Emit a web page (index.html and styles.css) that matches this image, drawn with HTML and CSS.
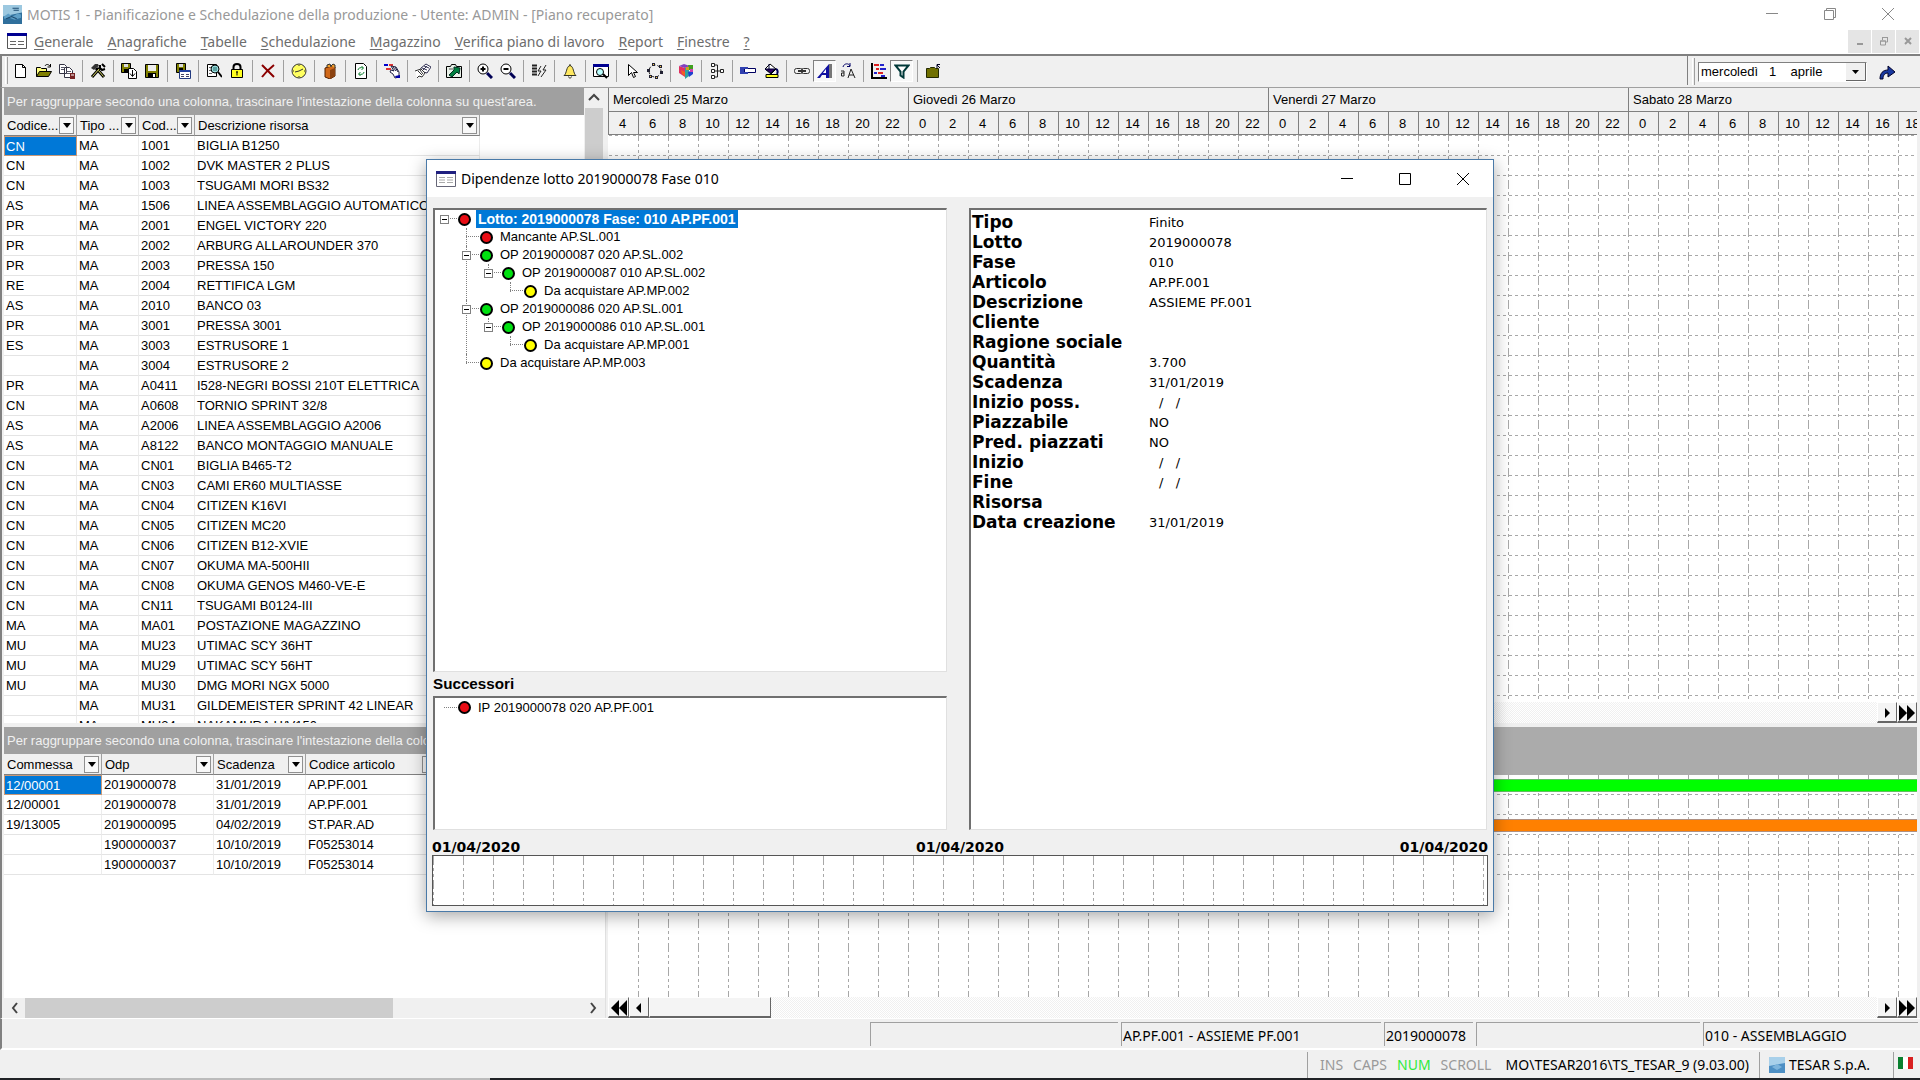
FILE: index.html
```html
<!DOCTYPE html>
<html lang="it">
<head>
  <meta charset="UTF-8">
  <meta name="viewport" content="width=device-width, initial-scale=1.0">
  <title>MOTIS 1 - Pianificazione e Schedulazione della produzione</title>
  <link rel="stylesheet" href="styles.css">
</head>
<body>
  <!-- barra del titolo -->
  <header class="titlebar">
    <svg class="app-icon" viewBox="0 0 18 18"><rect width="18" height="18" fill="#2f6f9c"/><path d="M0 0h18v7L0 11z" fill="#9cc8e0"/><path d="M1 11l4-3 4 3 5-3 3 1v3l-6 2-5-2-5 1z" fill="#5fa0c8"/><path d="M3 13l5-2 5 2M9 3h6M10 5h5" stroke="#1c4a70" fill="none"/></svg>
    <h1>MOTIS 1 - Pianificazione e Schedulazione della produzione - Utente: ADMIN - [Piano recuperato]</h1>
    <div class="window-buttons">
      <button aria-label="Riduci a icona"><svg viewBox="0 0 12 12"><path d="M0 5.5h12"/></svg></button>
      <button aria-label="Ripristina"><svg viewBox="0 0 12 12"><path d="M.5 2.5h9v9h-9zM2.5 2V.5h9v9H10"/></svg></button>
      <button aria-label="Chiudi"><svg viewBox="0 0 12 12"><path d="M0 0l12 12M12 0L0 12"/></svg></button>
    </div>
  </header>

  <!-- menu -->
  <nav class="menubar">
    <svg class="form-icon" viewBox="0 0 20 16"><path d="M.5.5h19v15H.5z" fill="#fff" stroke="#555"/><path d="M0 0h20v3H0z" fill="#000090"/><path d="M3 8.5h6M11 8.5h6M3 11.5h6M11 11.5h6" stroke="#666"/></svg>
    <button><u>G</u>enerale</button>
    <button><u>A</u>nagrafiche</button>
    <button><u>T</u>abelle</button>
    <button><u>S</u>chedulazione</button>
    <button><u>M</u>agazzino</button>
    <button><u>V</u>erifica piano di lavoro</button>
    <button><u>R</u>eport</button>
    <button><u>F</u>inestre</button>
    <button><u>?</u></button>
    <div class="mdi-buttons">
      <button aria-label="Riduci piano"><svg viewBox="0 0 10 10"><path d="M2 8h6" stroke-width="2"/></svg></button>
      <button aria-label="Ripristina piano"><svg viewBox="0 0 10 10"><path d="M1.5 5h5v4h-5zM1 5h6M3.5 4V1.5h5V6H7M3 1.5h6"/></svg></button>
      <button aria-label="Chiudi piano"><svg viewBox="0 0 10 10"><path d="M2 2l6 6M8 2L2 8" stroke-width="2"/></svg></button>
    </div>
  </nav>

  <!-- barra degli strumenti -->
  <div class="toolbar">
    <span class="grip"></span>
    <button aria-label="Nuovo"><svg viewBox="0 0 16 16"><path d="M2.5 1.5h7l3 3v10h-10z" fill="#fff" stroke="#000"/><path d="M9.5 1.5v3h3" fill="none" stroke="#000"/></svg></button>
    <button aria-label="Apri"><svg viewBox="0 0 16 16"><path d="M.5 13.5v-9h4l1 1h5v3" fill="#ffff80" stroke="#000"/><path d="M.5 13.5l3-5h12l-3 5z" fill="#808000" stroke="#000"/><path d="M9 3c1-2 3-2 5 0M14.5 1v3h-3" fill="none" stroke="#000"/></svg></button>
    <button aria-label="Copia piano"><svg viewBox="0 0 16 16"><path d="M.5 1.5h5l2 2v7h-7zM5.5 4.5h5l3 3v7h-8z" fill="#fff" stroke="#334"/><path d="M2 4.5h3M2 6.5h3M7 8.5h5M7 10.5h5" stroke="#556"/><path d="M11 10h5v6h-5z" fill="#722"/><path d="M12 12h3" stroke="#fff"/></svg></button>
    <span class="sep"></span>
    <button aria-label="Strumenti"><svg viewBox="0 0 16 16"><path d="M2 14l8-9M14 14L6 5" stroke="#000" stroke-width="3"/><path d="M2.5 13.5l7-8M13.5 13.5l-5-6" stroke="#dd6"/><path d="M1 5l4-4h3l1 2-3 2-2 2z" fill="#333"/><path d="M10 2v3l2 2 3-1M12 1l3 3" stroke="#000" fill="none" stroke-width="2"/></svg></button>
    <span class="sep"></span>
    <button aria-label="Salva con nome"><svg viewBox="0 0 16 16"><path d="M.5.5h9v9h-9z" fill="#808000" stroke="#000"/><path d="M3 1h4v3H3z" fill="#ddd"/><path d="M3 6h4v3H3z" fill="#000"/><path d="M7.5 5.5h5l3 3v7h-8z" fill="#fff" stroke="#000"/><path d="M11.5 7v6M9 10.5l2.5 3 2.5-3" stroke="#000" fill="none"/></svg></button>
    <button aria-label="Salva"><svg viewBox="0 0 16 16"><path d="M1.5 1.5h13v13h-13z" fill="#808000" stroke="#000"/><path d="M4 2h8v6H4z" fill="#eee"/><path d="M4 10h8v5H4z" fill="#000"/><path d="M9 11h2v3H9z" fill="#fff"/></svg></button>
    <span class="sep"></span>
    <button aria-label="Salva scheda"><svg viewBox="0 0 16 16"><path d="M1.5.5h9v9h-9z" fill="#808000" stroke="#000"/><path d="M4 1h4v3H4z" fill="#ddd"/><path d="M4 5h4v3H4z" fill="#000"/><path d="M4.500 7.500h11v8h-11z" fill="#fff" stroke="#223a80"/><path d="M6 11.500h3M11 11.500h3M6 13.500h3M11 13.500h3" stroke="#446"/><path d="M5 7h10v2H5z" fill="#2040a0"/></svg></button>
    <span class="sep"></span>
    <button aria-label="Anteprima"><svg viewBox="0 0 16 16"><path d="M1.5 1.5h9v12h-9z" fill="#fff" stroke="#000"/><path d="M3 4.5h3M3 7.5h3M3 10.5h3" stroke="#666"/><circle cx="9" cy="6" r="4" fill="#9dd" stroke="#000"/><path d="M7 5h4M7 7h4" stroke="#266"/><path d="M12 9l4 5" stroke="#000" stroke-width="2"/></svg></button>
    <button aria-label="Blocca"><svg viewBox="0 0 16 16"><path d="M4.5 7V4c0-4 7-4 7 0v3" fill="none" stroke="#000" stroke-width="2"/><path d="M2.5 6.5h11v8h-11z" fill="#ffff20" stroke="#000"/><path d="M8 8.5v4M7 9h2" stroke="#000"/></svg></button>
    <span class="sep"></span>
    <button aria-label="Elimina"><svg viewBox="0 0 16 16"><path d="M2 2l12 12M14 2C9 6 5 10 2 14" stroke="#8b0000" stroke-width="2" fill="none"/></svg></button>
    <span class="sep"></span>
    <button aria-label="Orologio"><svg viewBox="0 0 16 16"><circle cx="8" cy="8" r="7" fill="#ffff60" stroke="#333"/><path d="M4 9l4-1 4-2M8 2v1M8 13v1M2 8h1M13 8h1" stroke="#333" fill="none"/></svg></button>
    <span class="sep"></span>
    <button aria-label="Archivio"><svg viewBox="0 0 16 16"><path d="M3 5l7-2 3 1v9l-5 3-5-2z" fill="#d06818" stroke="#502000"/><path d="M8 7l5-2v8l-5 3z" fill="#8b4210"/><path d="M5 4V2l3-1 1 3M9 3l2-2 2 1v3" fill="#f0a030" stroke="#333"/></svg></button>
    <span class="sep"></span>
    <button aria-label="Aggiorna"><svg viewBox="0 0 16 16"><path d="M2.5.5h8l3 3v12h-11z" fill="#fff" stroke="#000"/><path d="M5 7c0-2 3-3 5-2M8.5 3l2 2-2 2M11 9c0 2-3 3-5 2M7.5 9l-2 2 2 2" fill="none" stroke="#108030"/></svg></button>
    <span class="sep"></span>
    <button aria-label="Piazza"><svg viewBox="0 0 16 16"><path d="M0 2h4" stroke="#00c" stroke-width="2"/><path d="M5 2h4" stroke="#d33" stroke-width="2"/><path d="M2 6h5" stroke="#d33" stroke-width="2"/><path d="M7 3l5 1 3 5v5l-4 1-2-4-3-2 1-2 3 1z" fill="#fff" stroke="#224"/><path d="M9 4l3 4M11 4l3 5" stroke="#224"/><path d="M11 13l5-1v3h-4z" fill="#00a"/></svg></button>
    <span class="sep"></span>
    <button aria-label="Cancella piano"><svg viewBox="0 0 16 16"><path d="M6 5l5-4 5 3-4 6-7-2z" fill="#fff" stroke="#335"/><path d="M7 5l5 2M9 3l5 2M7 8l5-5" stroke="#335"/><path d="M0 8l6-2 4 4-3 4-3-1-2 2" fill="#fff" stroke="#333"/><path d="M3 8l4 4M5 7l3 4" stroke="#333"/></svg></button>
    <span class="sep"></span>
    <button aria-label="Esporta"><svg viewBox="0 0 16 16"><path d="M.5 3.5h4l1-2h4l1 2h5v11H.5z" fill="#e8f0e8" stroke="#000"/><path d="M3 12l5-5V4l6 1-1 6-2-2-5 5z" fill="#008040" stroke="#003020"/><path d="M3 6h4" stroke="#555"/></svg></button>
    <span class="sep"></span>
    <button aria-label="Ingrandisci"><svg viewBox="0 0 16 16"><circle cx="6" cy="6" r="5" fill="#fff" stroke="#000"/><path d="M3.5 6h5M6 3.5v5" stroke="#000" stroke-width="2"/><path d="M10 10l5 5" stroke="#005" stroke-width="3"/></svg></button>
    <button aria-label="Riduci"><svg viewBox="0 0 16 16"><circle cx="6" cy="6" r="5" fill="#fff" stroke="#000"/><path d="M3.5 6h5" stroke="#000" stroke-width="2"/><path d="M10 10l5 5" stroke="#005" stroke-width="3"/></svg></button>
    <span class="sep"></span>
    <button aria-label="Elenco"><svg viewBox="0 0 16 16"><path d="M1 2.5h5M1 5.5h5M1 8.5h5M1 11.5h5" stroke="#222" stroke-width="2"/><path d="M10 3l-3 5h3l-3 5M15 2l-3 5h3l-5 7" stroke="#222" fill="none"/></svg></button>
    <span class="sep"></span>
    <button aria-label="Avvisi"><svg viewBox="0 0 16 16"><path d="M2 12.5c3-2 2-9 6-10 4 1 3 8 6 10z" fill="#ffe860" stroke="#332"/><path d="M8 1v2M6.500 13.500c0 2 3 2 3 0" stroke="#332" fill="none"/></svg></button>
    <span class="sep"></span>
    <button aria-label="Cerca"><svg viewBox="0 0 16 16"><path d="M.5 1.5h15v12H.5z" fill="#fff" stroke="#000"/><path d="M0 1h16v3H0z" fill="#000090"/><circle cx="7" cy="9" r="3.500" fill="#bff" stroke="#000"/><path d="M10 11l4 4" stroke="#000" stroke-width="2"/></svg></button>
    <span class="sep"></span>
    <button aria-label="Seleziona"><svg viewBox="0 0 16 16"><path d="M4.5 1.5v11l3-3 2 5 2-1-2-4h4z" fill="#fff" stroke="#000"/></svg></button>
    <button aria-label="Ruota"><svg viewBox="0 0 16 16"><circle cx="8" cy="8" r="6" fill="none" stroke="#222" stroke-dasharray="3 2"/><path d="M5 0h3v3H5zM0 6h3v3H0zM12 2h3v3h-3zM13 8h3v3h-3zM2 12h3v3H2zM8 13h3v3H8z" fill="#223"/><path d="M6 1h1v1H6zM13 3h1v1h-1zM3 13h1v1H3zM9 14h1v1H9z" fill="#fc4"/></svg></button>
    <span class="sep"></span>
    <button aria-label="Colori"><svg viewBox="0 0 16 16"><path d="M1 3l6 2v9l-6-4z" fill="#e03060"/><path d="M7 5l4-2v10l-4 3z" fill="#30a0a0"/><path d="M1 3l5-2 6 2-5 2z" fill="#8040c0"/><path d="M10 2h5v5h-4z" fill="#40a020"/><path d="M10 9l5-2v4l-4 3z" fill="#2040d0"/><path d="M3 7l4 2v4l-3-2z" fill="#f06020"/><path d="M12 6h3v3h-3z" fill="#d040b0"/><path d="M8 4h3v3H8z" fill="#d0a020"/></svg></button>
    <span class="sep"></span>
    <button aria-label="Struttura"><svg viewBox="0 0 16 16"><path d="M2.5.5h3v3h-3zM2.5 6.5h3v3h-3zM2.5 12.5h3v3h-3zM11.5 6.5h3v3h-3z" fill="#fff" stroke="#222"/><path d="M6 2h2.5v12H6M6 8h5" fill="none" stroke="#222"/></svg></button>
    <span class="sep"></span>
    <button aria-label="Barra attività"><svg viewBox="0 0 16 16"><path d="M4.5 5.5h11v4h-11z" fill="#fff" stroke="#000060"/><path d="M0 4h8v2H4v3h4v2H0z" fill="#3040b0"/></svg></button>
    <button aria-label="Riempi"><svg viewBox="0 0 16 16"><path d="M2 6l5-5 6 5-5 5z" fill="#fff" stroke="#000"/><path d="M6 1v6M2 6h10l-4 4z" fill="#306" stroke="#003"/><path d="M13 6c2 1 2 3 1 5" fill="none" stroke="#005" stroke-width="2"/><path d="M3 11.5h12v3H3z" fill="#ffff20" stroke="#000"/></svg></button>
    <span class="sep"></span>
    <button aria-label="Collega"><svg viewBox="0 0 16 16"><rect x=".5" y="5.5" width="8" height="5" rx="2" fill="none" stroke="#333"/><rect x="7.5" y="5.5" width="8" height="5" rx="2" fill="none" stroke="#333"/><path d="M4 8h8" stroke="#333" stroke-width="2"/></svg></button>
    <button class="pressed" aria-label="Carattere"><svg viewBox="0 0 16 16"><path d="M12 1v14H9v-3H5l-2 3H0z" fill="#1010a0"/><path d="M9 6v4H6z" fill="#fff"/><path d="M12 1h3v14h-3z" fill="#777"/></svg></button>
    <button aria-label="Dimensione testo"><svg viewBox="0 0 16 16"><path d="M3 4C4 0 9 0 10 3M10 0v3.500H7" fill="none" stroke="#006"/><path d="M1 8h3v5H1.500v-3H4M8 15l3-9 4 9M9 12h5" fill="none" stroke="#222"/></svg></button>
    <span class="sep"></span>
    <button aria-label="Gantt"><svg viewBox="0 0 16 16"><path d="M1 0v15h15" fill="none" stroke="#000" stroke-width="2"/><path d="M3 2h5M5 6h3M7 10h5" stroke="#d22" stroke-width="2"/><path d="M9 2h4M9 6h6M3 10h3M10 13h4" stroke="#22c" stroke-width="2"/></svg></button>
    <button class="pressed" aria-label="Filtro"><svg viewBox="0 0 16 16"><path d="M1.5 2.5h13l-5 6v6l-3-2v-4z" fill="#fff" stroke="#003838" stroke-width="2"/></svg></button>
    <span class="sep"></span>
    <button aria-label="Chiudi cartella"><svg viewBox="0 0 16 16"><path d="M1.5 5.5h3l1-1h4l1 1h3v9h-12z" fill="#707000" stroke="#222800"/><path d="M15 5l-3-3M12 5V1.500h3" fill="none" stroke="#002"/></svg></button>
    <div class="date-tools">
      <span class="grip"></span>
      <select aria-label="Data piano"><option>mercoledì&nbsp;&nbsp; 1&nbsp;&nbsp;&nbsp; aprile</option></select>
      <button aria-label="Vai alla data"><svg viewBox="0 0 16 16"><path d="M1 15c0-6 3-9 8-9V2l7 6-7 5V9c-3 0-5 2-5 6z" fill="#1838a0" stroke="#000028"/></svg></button>
    </div>
  </div>

  <main class="plan">
    <section class="grids">
      <div class="grid-top">
        <div class="grid-body">
          <p class="group-bar">Per raggruppare secondo una colonna, trascinare l'intestazione della colonna su quest'area.</p>
          <table class="grid resources">
            <colgroup><col class="c-code"><col class="c-type"><col class="c-res"><col class="c-desc"></colgroup>
            <thead>
              <tr>
                <th><div>Codice...<button aria-label="Filtra codice"></button></div></th>
                <th><div>Tipo ...<button aria-label="Filtra tipo"></button></div></th>
                <th><div>Cod...<button aria-label="Filtra risorsa"></button></div></th>
                <th><div>Descrizione risorsa<button aria-label="Filtra descrizione"></button></div></th>
              </tr>
            </thead>
            <tbody>
              <tr><td class="current">CN</td><td>MA</td><td>1001</td><td>BIGLIA B1250</td></tr>
              <tr><td>CN</td><td>MA</td><td>1002</td><td>DVK MASTER 2 PLUS</td></tr>
              <tr><td>CN</td><td>MA</td><td>1003</td><td>TSUGAMI MORI BS32</td></tr>
              <tr><td>AS</td><td>MA</td><td>1506</td><td>LINEA ASSEMBLAGGIO AUTOMATICO</td></tr>
              <tr><td>PR</td><td>MA</td><td>2001</td><td>ENGEL VICTORY 220</td></tr>
              <tr><td>PR</td><td>MA</td><td>2002</td><td>ARBURG ALLAROUNDER 370</td></tr>
              <tr><td>PR</td><td>MA</td><td>2003</td><td>PRESSA 150</td></tr>
              <tr><td>RE</td><td>MA</td><td>2004</td><td>RETTIFICA LGM</td></tr>
              <tr><td>AS</td><td>MA</td><td>2010</td><td>BANCO 03</td></tr>
              <tr><td>PR</td><td>MA</td><td>3001</td><td>PRESSA 3001</td></tr>
              <tr><td>ES</td><td>MA</td><td>3003</td><td>ESTRUSORE 1</td></tr>
              <tr><td></td><td>MA</td><td>3004</td><td>ESTRUSORE 2</td></tr>
              <tr><td>PR</td><td>MA</td><td>A0411</td><td>I528-NEGRI BOSSI 210T ELETTRICA</td></tr>
              <tr><td>CN</td><td>MA</td><td>A0608</td><td>TORNIO SPRINT 32/8</td></tr>
              <tr><td>AS</td><td>MA</td><td>A2006</td><td>LINEA ASSEMBLAGGIO A2006</td></tr>
              <tr><td>AS</td><td>MA</td><td>A8122</td><td>BANCO MONTAGGIO MANUALE</td></tr>
              <tr><td>CN</td><td>MA</td><td>CN01</td><td>BIGLIA B465-T2</td></tr>
              <tr><td>CN</td><td>MA</td><td>CN03</td><td>CAMI ER60 MULTIASSE</td></tr>
              <tr><td>CN</td><td>MA</td><td>CN04</td><td>CITIZEN K16VI</td></tr>
              <tr><td>CN</td><td>MA</td><td>CN05</td><td>CITIZEN MC20</td></tr>
              <tr><td>CN</td><td>MA</td><td>CN06</td><td>CITIZEN B12-XVIE</td></tr>
              <tr><td>CN</td><td>MA</td><td>CN07</td><td>OKUMA MA-500HII</td></tr>
              <tr><td>CN</td><td>MA</td><td>CN08</td><td>OKUMA GENOS M460-VE-E</td></tr>
              <tr><td>CN</td><td>MA</td><td>CN11</td><td>TSUGAMI B0124-III</td></tr>
              <tr><td>MA</td><td>MA</td><td>MA01</td><td>POSTAZIONE MAGAZZINO</td></tr>
              <tr><td>MU</td><td>MA</td><td>MU23</td><td>UTIMAC SCY 36HT</td></tr>
              <tr><td>MU</td><td>MA</td><td>MU29</td><td>UTIMAC SCY 56HT</td></tr>
              <tr><td>MU</td><td>MA</td><td>MU30</td><td>DMG MORI NGX 5000</td></tr>
              <tr><td></td><td>MA</td><td>MU31</td><td>GILDEMEISTER SPRINT 42 LINEAR</td></tr>
              <tr><td></td><td>MA</td><td>MU34</td><td>NAKAMURA H/V150</td></tr>
            </tbody>
          </table>
        </div>
        <div class="vscroll">
          <svg viewBox="0 0 18 20"><path d="M4 12l5-5 5 5" fill="none" stroke="#444" stroke-width="2"/></svg>
          <span class="thumb"></span>
        </div>
      </div>
      <div class="grid-bottom">
        <p class="group-bar">Per raggruppare secondo una colonna, trascinare l'intestazione della colonna su quest'area.</p>
        <table class="grid orders">
          <colgroup><col class="c-job"><col class="c-odp"><col class="c-due"><col class="c-item"></colgroup>
          <thead>
            <tr>
              <th><div>Commessa<button aria-label="Filtra commessa"></button></div></th>
              <th><div>Odp<button aria-label="Filtra odp"></button></div></th>
              <th><div>Scadenza<button aria-label="Filtra scadenza"></button></div></th>
              <th><div>Codice articolo<button aria-label="Filtra articolo"></button></div></th>
            </tr>
          </thead>
          <tbody>
            <tr><td class="current">12/00001</td><td>2019000078</td><td>31/01/2019</td><td>AP.PF.001</td></tr>
            <tr><td>12/00001</td><td>2019000078</td><td>31/01/2019</td><td>AP.PF.001</td></tr>
            <tr><td>19/13005</td><td>2019000095</td><td>04/02/2019</td><td>ST.PAR.AD</td></tr>
            <tr><td></td><td>1900000037</td><td>10/10/2019</td><td>F05253014</td></tr>
            <tr><td></td><td>1900000037</td><td>10/10/2019</td><td>F05253014</td></tr>
          </tbody>
        </table>
        <div class="hscroll">
          <svg viewBox="0 0 20 20"><path d="M12 5l-4 5 4 5" fill="none" stroke="#444" stroke-width="2"/></svg>
          <span class="track"><span class="thumb"></span></span>
          <svg viewBox="0 0 20 20"><path d="M8 5l4 5-4 5" fill="none" stroke="#444" stroke-width="2"/></svg>
        </div>
      </div>
    </section>

    <section class="gantt">
      <div class="gantt-top">
        <div class="days">
          <span class="short">Mercoledì 25 Marzo</span><span>Giovedì 26 Marzo</span><span>Venerdì 27 Marzo</span><span>Sabato 28 Marzo</span>
        </div>
        <div class="hours">
          <span>4</span><span>6</span><span>8</span><span>10</span><span>12</span><span>14</span><span>16</span><span>18</span><span>20</span><span>22</span>
          <span>0</span><span>2</span><span>4</span><span>6</span><span>8</span><span>10</span><span>12</span><span>14</span><span>16</span><span>18</span><span>20</span><span>22</span>
          <span>0</span><span>2</span><span>4</span><span>6</span><span>8</span><span>10</span><span>12</span><span>14</span><span>16</span><span>18</span><span>20</span><span>22</span>
          <span>0</span><span>2</span><span>4</span><span>6</span><span>8</span><span>10</span><span>12</span><span>14</span><span>16</span><span>18</span>
        </div>
        <div class="lanes lanes-all"></div>
        <div class="old-scroll">
          <button aria-label="Inizio"><svg viewBox="0 0 16 16"><path d="M8 0v16L0 8zM16 0v16L8 8z"/></svg></button>
          <button aria-label="Indietro"><svg viewBox="0 0 16 16"><path d="M10 3v10L5 8z"/></svg></button>
          <span class="knob"></span>
          <span class="rail"></span>
          <button aria-label="Avanti"><svg viewBox="0 0 16 16"><path d="M6 3v10l5-5z"/></svg></button>
          <button aria-label="Fine"><svg viewBox="0 0 16 16"><path d="M0 0v16l8-8zM8 0v16l8-8z"/></svg></button>
        </div>
      </div>
      <div class="gantt-bottom">
        <div class="band"></div>
        <div class="lanes">
          <div class="lane"><span class="bar green"></span></div>
          <div class="lane"></div>
          <div class="lane"><span class="bar orange"></span></div>
          <div class="lane"></div>
          <div class="lane"></div>
        </div>
        <div class="old-scroll">
          <button aria-label="Inizio"><svg viewBox="0 0 16 16"><path d="M8 0v16L0 8zM16 0v16L8 8z"/></svg></button>
          <button aria-label="Indietro"><svg viewBox="0 0 16 16"><path d="M10 3v10L5 8z"/></svg></button>
          <span class="knob"></span>
          <span class="rail"></span>
          <button aria-label="Avanti"><svg viewBox="0 0 16 16"><path d="M6 3v10l5-5z"/></svg></button>
          <button aria-label="Fine"><svg viewBox="0 0 16 16"><path d="M0 0v16l8-8zM8 0v16l8-8z"/></svg></button>
        </div>
      </div>
    </section>
  </main>

  <!-- barre di stato -->
  <div class="status-info">
    <span class="w-a"></span>
    <span class="w-b">AP.PF.001 - ASSIEME PF.001</span>
    <span class="w-c">2019000078</span>
    <span class="w-d"></span>
    <span class="w-e">010 - ASSEMBLAGGIO</span>
  </div>
  <footer class="status-keys">
    <div class="keys"><span>INS</span><span>CAPS</span><span class="on">NUM</span><span>SCROLL</span><span class="path">MO\TESAR2016\TS_TESAR_9 (9.03.00)</span></div>
    <div class="company">
      <svg viewBox="0 0 16 16"><rect width="16" height="16" fill="#4d8fc4"/><path d="M0 0h16v6L0 9z" fill="#a8d0ea"/><path d="M3 10l5-3 5 3-5 3z" fill="#7db4dc"/></svg>
      TESAR S.p.A.
    </div>
    <div class="flag"><svg viewBox="0 0 15 12"><path d="M0 0h5v12H0z" fill="#0a8030"/><path d="M5 0h5v12H5z" fill="#fff"/><path d="M10 0h5v12h-5z" fill="#d82020"/></svg></div>
  </footer>
  <div class="taskbar-edge"><span></span></div>

  <!-- finestra dipendenze -->
  <div class="dialog" role="dialog" aria-labelledby="dialog-title">
    <div class="dialog-title">
      <svg class="form-icon" viewBox="0 0 20 16"><path d="M.5.5h19v15H.5z" fill="#fff" stroke="#667"/><path d="M0 0h20v3H0z" fill="#202080"/><path d="M3 6.5h6M11 6.5h6M3 9h6M11 9h6M3 11.5h6M11 11.5h6" stroke="#aaa"/></svg>
      <h2 id="dialog-title">Dipendenze lotto 2019000078 Fase 010</h2>
      <div class="window-buttons">
        <button aria-label="Riduci a icona"><svg viewBox="0 0 12 12"><path d="M0 5.5h12"/></svg></button>
        <button aria-label="Ingrandisci"><svg viewBox="0 0 12 12"><path d="M.5.5h11v11H.5z"/></svg></button>
        <button aria-label="Chiudi"><svg viewBox="0 0 12 12"><path d="M0 0l12 12M12 0L0 12"/></svg></button>
      </div>
    </div>
    <div class="dialog-body">
      <div class="trees">
        <div class="box box-main">
          <ul class="tree">
            <li>
              <div class="node selected"><button aria-label="Comprimi"></button><i class="dot red"></i><span>Lotto: 2019000078 Fase: 010 AP.PF.001</span></div>
              <ul>
                <li><div class="node"><i class="dot red"></i><span>Mancante AP.SL.001</span></div></li>
                <li>
                  <div class="node"><button aria-label="Comprimi"></button><i class="dot green"></i><span>OP 2019000087 020 AP.SL.002</span></div>
                  <ul>
                    <li>
                      <div class="node"><button aria-label="Comprimi"></button><i class="dot green"></i><span>OP 2019000087 010 AP.SL.002</span></div>
                      <ul>
                        <li><div class="node"><i class="dot yellow"></i><span>Da acquistare AP.MP.002</span></div></li>
                      </ul>
                    </li>
                  </ul>
                </li>
                <li>
                  <div class="node"><button aria-label="Comprimi"></button><i class="dot green"></i><span>OP 2019000086 020 AP.SL.001</span></div>
                  <ul>
                    <li>
                      <div class="node"><button aria-label="Comprimi"></button><i class="dot green"></i><span>OP 2019000086 010 AP.SL.001</span></div>
                      <ul>
                        <li><div class="node"><i class="dot yellow"></i><span>Da acquistare AP.MP.001</span></div></li>
                      </ul>
                    </li>
                  </ul>
                </li>
                <li><div class="node"><i class="dot yellow"></i><span>Da acquistare AP.MP.003</span></div></li>
              </ul>
            </li>
          </ul>
        </div>
        <h3>Successori</h3>
        <div class="box box-next">
          <ul class="tree">
            <li><div class="node"><i class="dot red"></i><span>IP 2019000078 020 AP.PF.001</span></div></li>
          </ul>
        </div>
      </div>
      <dl class="box details">
        <dt>Tipo</dt><dd>Finito</dd>
        <dt>Lotto</dt><dd>2019000078</dd>
        <dt>Fase</dt><dd>010</dd>
        <dt>Articolo</dt><dd>AP.PF.001</dd>
        <dt>Descrizione</dt><dd>ASSIEME PF.001</dd>
        <dt>Cliente</dt><dd></dd>
        <dt>Ragione sociale</dt><dd></dd>
        <dt>Quantità</dt><dd>3.700</dd>
        <dt>Scadenza</dt><dd>31/01/2019</dd>
        <dt>Inizio poss.</dt><dd class="blank">/&nbsp;&nbsp; /</dd>
        <dt>Piazzabile</dt><dd>NO</dd>
        <dt>Pred. piazzati</dt><dd>NO</dd>
        <dt>Inizio</dt><dd class="blank">/&nbsp;&nbsp; /</dd>
        <dt>Fine</dt><dd class="blank">/&nbsp;&nbsp; /</dd>
        <dt>Risorsa</dt><dd></dd>
        <dt>Data creazione</dt><dd>31/01/2019</dd>
      </dl>
    </div>
    <div class="dates"><span>01/04/2020</span><span>01/04/2020</span><span>01/04/2020</span></div>
    <div class="timeline"></div>
  </div>
</body>
</html>
```
FILE: styles.css
```css
* {
  box-sizing: border-box;
}
body {
  margin: 0;
  height: 100vh;
  display: flex;
  flex-direction: column;
  position: relative;
  overflow: hidden;
  background: #f0f0f0;
  color: #000;
  font-family: "Liberation Sans", Arial, sans-serif;
  font-size: 13px;
}
h1, h2, h3, p, ul, dl, dd {
  margin: 0;
  padding: 0;
  font-weight: normal;
}
button {
  border: 0;
  padding: 0;
  background: none;
  font: inherit;
  color: inherit;
}
svg {
  display: block;
  flex: none;
}

/* titolo e menu */
.titlebar, .menubar, .status-info, .status-keys, .dialog-title {
  font-family: "Noto Sans", "Open Sans", sans-serif;
  font-size: 14px;
}
.titlebar {
  height: 28px;
  display: flex;
  align-items: center;
  background: #fff;
  padding: 0 3px;
}
.app-icon {
  width: 19px;
  height: 19px;
  margin-right: 5px;
}
.titlebar h1 {
  flex: 1;
  font-size: 14px;
  color: #999;
}
.window-buttons {
  display: flex;
}
.window-buttons button {
  width: 58px;
  height: 28px;
  display: flex;
  align-items: center;
  justify-content: center;
}
.window-buttons svg {
  width: 12px;
  height: 12px;
  fill: none;
  stroke: #888;
}
.menubar {
  height: 26px;
  display: flex;
  align-items: center;
  gap: 14px;
  padding-left: 7px;
  background: #fff;
  color: #6d6d6d;
}
.form-icon {
  width: 20px;
  height: 16px;
}
.menubar .form-icon {
  margin-right: -7px;
}
.menubar u {
  text-underline-offset: 2px;
}
.mdi-buttons {
  display: flex;
  gap: 1px;
  margin-left: auto;
  padding-right: 1px;
}
.mdi-buttons button {
  width: 23px;
  height: 23px;
  background: #e5e5e5;
  display: flex;
  align-items: center;
  justify-content: center;
}
.mdi-buttons svg {
  width: 10px;
  height: 10px;
  fill: none;
  stroke: #999;
}

/* strumenti */
.toolbar {
  height: 34px;
  display: flex;
  align-items: center;
  border-top: 2px solid #808080;
  border-left: 2px solid #808080;
  border-bottom: 1px solid #a0a0a0;
  padding: 0 0 2px 3px;
}
.grip {
  width: 3px;
  height: 27px;
  margin-right: 1px;
  border-right: 1px solid #a0a0a0;
  border-left: 1px solid #fff;
}
.toolbar button {
  width: 23px;
  height: 22px;
  flex: none;
  display: flex;
  align-items: center;
  justify-content: center;
}
.toolbar svg {
  width: 16px;
  height: 16px;
}
.toolbar .pressed {
  background: #f8f8f8;
  border: 1px solid #fff;
  border-top-color: #808080;
  border-left-color: #808080;
}
.sep {
  flex: none;
  width: 1px;
  height: 22px;
  margin: 0 3px 0 4px;
  background: #a0a0a0;
}
.date-tools {
  margin-left: auto;
  height: 100%;
  display: flex;
  align-items: center;
  border-left: 1px solid #808080;
  padding: 2px 22px 0 4px;
}
.date-tools select {
  appearance: none;
  width: 169px;
  height: 20px;
  margin: 0 8px 0 2px;
  padding: 0 24px 0 2px;
  border: 1px solid #fff;
  border-top-color: #808080;
  border-left-color: #808080;
  border-radius: 0;
  color: #000;
  font-family: "Liberation Sans", Arial, sans-serif;
  font-size: 13px;
  background:
    url("data:image/svg+xml,%3Csvg xmlns='http://www.w3.org/2000/svg' width='20' height='18'%3E%3Cpath d='M0 0h20v18H0z' fill='%23666'/%3E%3Cpath d='M0 0h19v17H0z' fill='%23f0f0f0'/%3E%3Cpath d='M6 7h7l-3.5 4z'/%3E%3C/svg%3E") right center no-repeat,
    #fff;
}

/* area piano */
.plan {
  flex: 1;
  min-height: 0;
  display: flex;
  border-left: 2px solid #808080;
  padding: 0 3px 0 2px;
}
.grids {
  flex: none;
  width: 602px;
  margin-right: 2px;
  display: flex;
  flex-direction: column;
}
.grid-top {
  flex: 635 1 0;
  min-height: 0;
  display: flex;
  margin-bottom: 4px;
  overflow: hidden;
}
.grid-body {
  flex: 1;
  background: #fff;
}
.group-bar {
  height: 27px;
  line-height: 27px;
  padding-left: 3px;
  background: #a0a0a0;
  color: #f0f0f0;
  overflow: hidden;
  white-space: nowrap;
}
.grid {
  table-layout: fixed;
  border-collapse: separate;
  border-spacing: 0;
}
.resources { width: 476px; }
.orders { width: 436px; }
.c-code { width: 73px; }
.c-type { width: 62px; }
.c-res { width: 56px; }
.c-job { width: 98px; }
.c-odp { width: 112px; }
.c-due { width: 92px; }
.grid th {
  height: 21px;
  padding: 0 2px 0 3px;
  background: #f0f0f0;
  border-right: 1px solid #a0a0a0;
  border-bottom: 1px solid #808080;
  font-weight: normal;
  text-align: left;
  white-space: nowrap;
}
.grid th div {
  display: flex;
  align-items: center;
  justify-content: space-between;
}
.grid th button {
  flex: none;
  width: 15px;
  height: 17px;
  border: 1px solid #909090;
  background: #f8f8f8;
  display: flex;
  align-items: center;
  justify-content: center;
}
.grid th button::after {
  content: "";
  border: 4px solid transparent;
  border-top: 5px solid #000;
  border-bottom: 0;
}
.grid td {
  height: 20px;
  padding: 0 0 0 2px;
  border-right: 1px solid #ececec;
  border-bottom: 1px solid #e4e4e4;
  white-space: nowrap;
  overflow: hidden;
}
.grid .current {
  background: #0078d7;
  border: 1px solid #c89878;
  padding: 0 0 0 1px;
  color: #fff;
}
.vscroll {
  flex: none;
  width: 22px;
  padding: 0 3px 0 1px;
  display: flex;
  flex-direction: column;
}
.vscroll svg {
  width: 18px;
  height: 20px;
}
.vscroll .thumb {
  flex: 1;
  background: #cdcdcd;
}
.grid-bottom {
  flex: 291 1 0;
  min-height: 0;
  display: flex;
  flex-direction: column;
  background: #fff;
  border-right: 1px solid #e0e0e0;
}
.hscroll {
  margin-top: auto;
  height: 20px;
  padding: 0 2px 0 1px;
  display: flex;
  background: #f0f0f0;
}
.hscroll svg {
  width: 20px;
  height: 20px;
}
.hscroll .track {
  flex: 1;
  display: flex;
}
.hscroll .thumb {
  width: 66%;
  background: #cdcdcd;
}

/* gantt */
.gantt {
  flex: 1;
  min-width: 0;
  display: flex;
  flex-direction: column;
}
.gantt-top {
  flex: 635 1 0;
  min-height: 0;
  display: flex;
  flex-direction: column;
  margin-bottom: 4px;
}
.days, .hours {
  display: flex;
  overflow: hidden;
  border-left: 1px solid #808080;
  border-bottom: 1px solid #808080;
}
.days span {
  flex: none;
  width: 360px;
  height: 23px;
  line-height: 23px;
  padding-left: 4px;
  border-right: 1px solid #808080;
}
.days .short {
  width: 300px;
}
.hours span {
  flex: none;
  width: 30px;
  height: 22px;
  line-height: 23px;
  text-align: center;
  border-right: 1px solid #808080;
  padding-right: 2px;
}
.lanes {
  flex: 1;
  border-left: 1px solid #fff;
  background: url("data:image/svg+xml,%3Csvg xmlns='http://www.w3.org/2000/svg' width='30' height='24'%3E%3Cpath d='M.5 0v9m0 3v3m0 3v3' stroke='%23a8a8a8'/%3E%3C/svg%3E") -1px 0 #fff;
}
.lanes-all {
  background:
    url("data:image/svg+xml,%3Csvg xmlns='http://www.w3.org/2000/svg' width='6' height='20'%3E%3Cpath d='M0 19.5h3' stroke='%23a8a8a8'/%3E%3C/svg%3E") 0 1px,
    url("data:image/svg+xml,%3Csvg xmlns='http://www.w3.org/2000/svg' width='30' height='24'%3E%3Cpath d='M.5 0v9m0 3v3m0 3v3' stroke='%23a8a8a8'/%3E%3C/svg%3E") -1px -3px #fff;
}
.gantt-bottom {
  flex: 291 1 0;
  min-height: 0;
  display: flex;
  flex-direction: column;
}
.band {
  height: 48px;
  background: #ababab;
}
.lane {
  height: 20px;
  padding-top: 4px;
  background: url("data:image/svg+xml,%3Csvg xmlns='http://www.w3.org/2000/svg' width='6' height='20'%3E%3Cpath d='M0 19.5h3' stroke='%23a8a8a8'/%3E%3C/svg%3E");
}
.bar {
  display: block;
  height: 13px;
  border: 1px solid #b09080;
  border-width: 1px 0;
}
.green {
  background: #0f0;
}
.bar.green {
  border-color: #60c060;
}
.orange {
  background: #ff8000;
}
.old-scroll {
  height: 21px;
  display: flex;
  background: repeating-conic-gradient(#f0f0f0 0 25%, #fff 0 50%) 0 0 / 2px 2px;
}
.old-scroll button, .knob {
  width: 20px;
  background: #f4f4f4;
  border: 1px solid #666;
  border-top-color: #fff;
  border-left-color: #fff;
  border-width: 1px 1px 2px 1px;
  display: flex;
  align-items: center;
  justify-content: center;
  padding-top: 2px;
}
.old-scroll button:first-child {
  width: 21px;
}
.old-scroll svg {
  width: 16px;
  height: 16px;
}
.old-scroll .knob {
  width: 122px;
}
.rail {
  flex: 1;
}

/* stato */
.status-info {
  height: 32px;
  display: flex;
  gap: 3px;
  justify-content: flex-end;
  padding: 3px 2px 2px 0;
  border-top: 1px solid #fff;
  border-bottom: 2px solid #fff;
  border-left: 2px solid #808080;
}
.status-info span {
  border-top: 1px solid #a0a0a0;
  border-left: 1px solid #a0a0a0;
  padding-left: 1px;
  line-height: 25px;
  white-space: nowrap;
}
.w-a { width: 248px; }
.w-b { width: 260px; }
.w-c { width: 89px; }
.w-d { width: 224px; }
.w-e { width: 215px; }
.status-keys {
  height: 28px;
  display: flex;
  justify-content: flex-end;
  align-items: stretch;
  padding: 2px 3px 0 0;
  line-height: 26px;
}
.keys, .company, .flag {
  display: flex;
  align-items: center;
  border-left: 1px solid #a0a0a0;
}
.keys {
  width: 452px;
  gap: 10px;
  padding: 0 10px 0 12px;
  color: #999;
}
.keys .on {
  color: #2eea3c;
}
.path {
  flex: 1;
  min-width: 0;
  display: flex;
  justify-content: flex-end;
  overflow: hidden;
  white-space: nowrap;
  color: #000;
}
.company {
  width: 134px;
  gap: 4px;
  padding-left: 9px;
  white-space: nowrap;
}
.company svg {
  width: 16px;
  height: 16px;
}
.flag {
  width: 24px;
  padding: 0 0 4px 4px;
}
.flag svg {
  width: 15px;
  height: 12px;
}
.taskbar-edge {
  height: 2px;
  background: #202226;
  padding-left: 60px;
}
.taskbar-edge span {
  display: block;
  width: 430px;
  height: 2px;
  background: #bbb;
}

/* finestra dipendenze */
.dialog {
  position: absolute;
  inset: 159px 426px 168px 426px;
  display: flex;
  flex-direction: column;
  background: #f0f0f0;
  border: 1px solid #4a7aa8;
  box-shadow: 0 4px 16px rgba(0, 0, 0, 0.35);
}
.dialog-title {
  height: 37px;
  display: flex;
  align-items: center;
  padding: 0 1px 0 9px;
  background: #fff;
}
.dialog-title h2 {
  flex: 1;
  margin-left: 5px;
  font-size: 14px;
}
.dialog-title .window-buttons svg {
  stroke: #000;
}
.dialog-body {
  flex: 1;
  min-height: 0;
  display: flex;
  gap: 22px;
  padding: 11px 6px 0;
}
.trees {
  flex: 1;
  display: flex;
  flex-direction: column;
}
.box {
  background: #fff;
  border: 2px solid #707070;
  border-right: 1px solid #e0e0e0;
  border-bottom: 1px solid #e0e0e0;
}
.box-main {
  flex: 466 1 0;
}
.box-next {
  flex: 132 1 0;
  padding-top: 1px;
}
.trees h3 {
  height: 24px;
  line-height: 23px;
  font-weight: bold;
}
.tree, .tree ul {
  list-style: none;
}
.tree ul {
  padding-left: 22px;
}
.tree li {
  position: relative;
}
.tree ul > li::before {
  content: "";
  position: absolute;
  left: 9px;
  top: 0;
  bottom: 0;
  border-left: 1px dotted #808080;
}
.tree ul > li:last-child::before {
  bottom: auto;
  height: 10px;
}
.node {
  position: relative;
  height: 18px;
  display: flex;
  align-items: center;
}
.node::before {
  content: "";
  width: 13px;
  height: 1px;
  margin-left: 9px;
  border-top: 1px dotted #808080;
}
.node button {
  position: absolute;
  left: 5px;
  top: 5px;
  width: 9px;
  height: 9px;
  border: 1px solid #808080;
  background: linear-gradient(#000, #000) center / 5px 1px no-repeat #fff;
}
.dot {
  width: 13px;
  height: 13px;
  margin: 0 5px 0 1px;
  border: 2px solid #000;
  border-radius: 50%;
}
.node::before, .dot {
  flex: none;
}
.node span {
  padding: 0 2px;
  line-height: 18px;
}
.red { background: #e80c14; }
.dot.green { background: #00e010; }
.yellow { background: #ff0; }
.selected span {
  background: #0078d7;
  color: #fff;
  font-size: 14px;
  font-weight: bold;
}
.details {
  flex: 1;
  display: grid;
  grid-template-columns: 177px 1fr;
  grid-auto-rows: 20px;
  align-content: start;
  padding: 2px 0 0 1px;
  line-height: 20px;
  font-family: "DejaVu Sans", Verdana, sans-serif;
}
.details dt {
  font-size: 17px;
  font-weight: bold;
}
.details dd {
  padding-top: 1px;
}
.details .blank {
  padding-left: 10px;
}
.dates {
  height: 25px;
  display: flex;
  justify-content: space-between;
  align-items: flex-end;
  padding: 0 5px;
  font-family: "DejaVu Sans", Verdana, sans-serif;
  font-size: 14px;
  font-weight: bold;
}
.timeline {
  height: 51px;
  margin: 0 5px 5px;
  border: 1px solid #555;
  background: url("data:image/svg+xml,%3Csvg xmlns='http://www.w3.org/2000/svg' width='30' height='24'%3E%3Cpath d='M.5 0v9m0 3v3m0 3v3' stroke='%23a8a8a8'/%3E%3C/svg%3E") 0 0 #fff;
}
```
